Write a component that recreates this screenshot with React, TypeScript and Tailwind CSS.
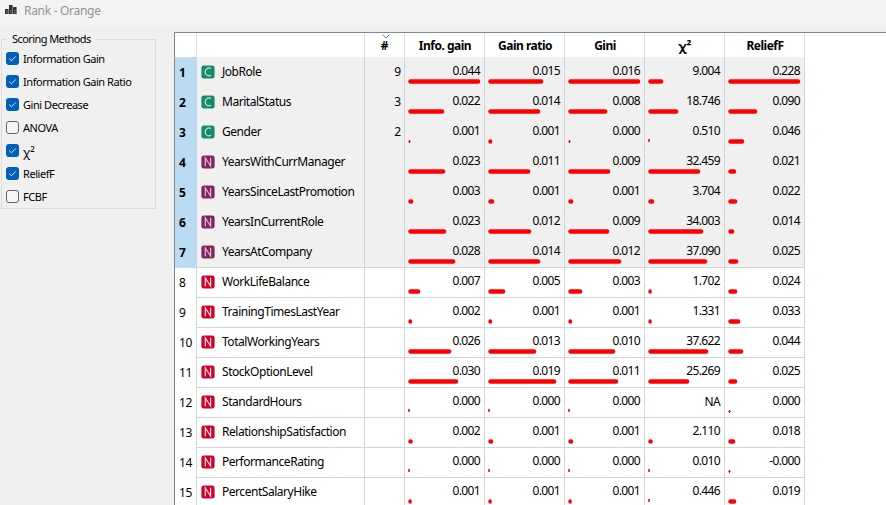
type Row = {
  name: string;
  kind: "C" | "N" | "M";
  count?: string;
  values: string[];
  bars: number[];
};

// Bar lengths are in pixels; 0 is a bare tick and -1 draws nothing.
const rows: Row[] = [
  { name: "JobRole", kind: "C", count: "9", values: ["0.044", "0.015", "0.016", "9.004", "0.228"], bars: [72, 55, 72, 15, 72] },
  { name: "MaritalStatus", kind: "C", count: "3", values: ["0.022", "0.014", "0.008", "18.746", "0.090"], bars: [36, 52, 39, 30, 29] },
  { name: "Gender", kind: "C", count: "2", values: ["0.001", "0.001", "0.000", "0.510", "0.046"], bars: [2.5, 4, 2.5, 0, 16] },
  { name: "YearsWithCurrManager", kind: "M", values: ["0.023", "0.011", "0.009", "32.459", "0.021"], bars: [37, 42, 42, 52, 8] },
  { name: "YearsSinceLastPromotion", kind: "M", values: ["0.003", "0.001", "0.001", "3.704", "0.022"], bars: [5, 6, 5, 6, 9] },
  { name: "YearsInCurrentRole", kind: "M", values: ["0.023", "0.012", "0.009", "34.003", "0.014"], bars: [38, 43, 41, 55, 6] },
  { name: "YearsAtCompany", kind: "M", values: ["0.028", "0.014", "0.012", "37.090", "0.025"], bars: [47, 52, 53, 59, 10] },
  { name: "WorkLifeBalance", kind: "N", values: ["0.007", "0.005", "0.003", "1.702", "0.024"], bars: [12, 17, 14, 3.5, 9] },
  { name: "TrainingTimesLastYear", kind: "N", values: ["0.002", "0.001", "0.001", "1.331", "0.033"], bars: [4, 4, 4, 3.5, 12] },
  { name: "TotalWorkingYears", kind: "N", values: ["0.026", "0.013", "0.010", "37.622", "0.044"], bars: [43, 48, 47, 60, 15] },
  { name: "StockOptionLevel", kind: "N", values: ["0.030", "0.019", "0.011", "25.269", "0.025"], bars: [50, 68, 50, 41, 9] },
  { name: "StandardHours", kind: "N", values: ["0.000", "0.000", "0.000", "NA", "0.000"], bars: [0, 0, 0, -1, 2.5] },
  { name: "RelationshipSatisfaction", kind: "N", values: ["0.002", "0.001", "0.001", "2.110", "0.018"], bars: [4.5, 5, 5, 4.5, 7] },
  { name: "PerformanceRating", kind: "N", values: ["0.000", "0.000", "0.000", "0.010", "-0.000"], bars: [0, 0, 0, 0, 2.5] },
  { name: "PercentSalaryHike", kind: "N", values: ["0.001", "0.001", "0.001", "0.446", "0.019"], bars: [3.5, 3.5, 3.5, 0, 8] },
];

const methods = [
  { label: "Information Gain", on: true },
  { label: "Information Gain Ratio", on: true },
  { label: "Gini Decrease", on: true },
  { label: "ANOVA", on: false },
  { label: "χ²", on: true },
  { label: "ReliefF", on: true },
  { label: "FCBF", on: false },
];

const grid = "grid grid-cols-[22px_168px_40px_80px_80px_80px_80px_80px]";
const kindColor = { C: "fill-[#168a6b]", M: "fill-[#852458]", N: "fill-[#cf0128]" };
const letterColor = { C: "stroke-[#bfe3d8]", M: "stroke-[#d5bdd8]", N: "stroke-[#ffdfe4]" };

function KindIcon({ kind }: { kind: Row["kind"] }) {
  return (
    <svg viewBox="0 0 14 14" className={`h-[14px] w-[14px] shrink-0 ${letterColor[kind]}`} strokeWidth="1.2">
      <rect x="0.4" y="0.4" width="13.2" height="13.2" rx="2.4" stroke="none" className={kindColor[kind]} />
      {kind === "C" ? (
        <path d="M10 3.5C7.4 2.2 4.2 3.4 4.2 7S7.4 11.4 10 10.4" fill="none" />
      ) : (
        <path d="M4.3 11.3V3L9.6 11V2.7" fill="none" />
      )}
    </svg>
  );
}

function Bar({ length }: { length: number }) {
  if (length < 0) return null;
  if (length === 0) return <div className="ml-px h-[3px] w-[2px] -translate-x-px bg-[#ff3c3c]" />;
  return (
    <svg width="76" height="5" className="block">
      {length < 3 ? (
        <>
          <rect x="0" y="2" width="3" height="1" fill="#ff5050" />
          <rect x="1" y="1" width="1" height="3" fill="#f00000" />
        </>
      ) : (
        <rect x="0.3" y="0.3" width={length} height="4.4" rx="2.2" fill="#ff0000" />
      )}
    </svg>
  );
}

function Checkbox({ on }: { on: boolean }) {
  return on ? (
    <span className="size-[13px] rounded-[3px] bg-[#005fb8]">
      <svg viewBox="0 0 13 13" className="size-[13px] fill-none stroke-[#d4e6f5]" strokeWidth="1">
        <path d="M3.2 6.6l2.3 2.2 4.3-4.4" />
      </svg>
    </span>
  ) : (
    <span className="size-[13px] rounded-[3px] border border-[#666] bg-[#f5f5f5]" />
  );
}

export default function App() {
  return (
    <div className="flex h-[505px] w-[886px] flex-col overflow-hidden bg-[#f0f0f0] font-['Noto_Sans','Open_Sans',sans-serif] text-[12px] text-black">
      <header className="flex h-[26px] shrink-0 items-start bg-[#f3f3f3] pl-[5px]">
        <svg width="12" height="10" viewBox="0 0 12 10" className="mt-[5px]" fill="#333">
          <path d="M0 4h3.6v5H0zM4 0h3.6v9H4zM8 2h3.6v7H8z" />
          <path d="M1 6h1.5M1 8h1.5M5 5h1.5M5 7h1.5M9 5.5h1.5M9 7.5h1.5" stroke="#aaa" strokeWidth=".6" />
        </svg>
        <h1 className="ml-[7px] mt-[3px] text-[12px] leading-[16px] tracking-[-0.3px] text-[#929292]">Rank - Orange</h1>
      </header>
      <main className="flex min-h-0 flex-1">
        <aside className="w-[174px] shrink-0 pl-px pt-[5px]">
          <fieldset className="h-[178px] w-[155px] border border-[#dcdcdc] pl-[4px]">
            <legend className="ml-px h-[16px] px-[5px] text-[11px] leading-[16px] tracking-[-0.58px]">Scoring Methods</legend>
            <div className="flex flex-col">
              {methods.map((m) => (
                <label key={m.label} className="flex h-[23px] items-center gap-[4px] text-[11px] tracking-[-0.45px]">
                  <Checkbox on={m.on} />
                  {m.label === "χ²" ? (
                    <span className="pt-[3px] text-[12px] leading-[16px] tracking-normal">
                      χ<span className="text-[13px]">²</span>
                    </span>
                  ) : (
                    <span className="pt-px">{m.label}</span>
                  )}
                </label>
              ))}
            </div>
          </fieldset>
        </aside>
        <section className="mt-[6px] flex-1 overflow-hidden border-l border-t border-[#7e8690] bg-white">
          <div className={`${grid} h-[24px] text-center font-bold leading-[26px] tracking-[-0.5px]`}>
            <div className="border-r border-[#e0e0e0]" />
            <div className="border-r border-[#e0e0e0]" />
            <div className="relative border-r border-[#e0e0e0]">
              <svg width="8" height="5" className="absolute left-[17px] top-px fill-none stroke-[#777]">
                <path d="M.5.5L4 4 7.5.5" />
              </svg>
              #
            </div>
            {["Info. gain", "Gain ratio", "Gini", "χ²", "ReliefF"].map((h) => (
              <div key={h} className="border-r border-[#e0e0e0] pl-px">
                {h === "χ²" ? <span className="text-[13px] tracking-normal">{h}</span> : h}
              </div>
            ))}
          </div>
          {rows.map((r, i) => {
            const selected = i < 7;
            return (
              <div key={r.name} className={`${grid} h-[30px]`}>
                <div className={selected ? "bg-[#bbdbf2] pl-[4px] font-bold leading-[31px]" : "border-r border-[#d4d4d4] pl-[4px] leading-[31px] tracking-[-0.4px]"}>
                  {i + 1}
                </div>
                <div className={`flex items-center border-b border-r border-[#d4d4d4] pl-[4px] ${selected ? "bg-[#f0f0f0]" : ""}`}>
                  <span className="-mt-px flex">
                    <KindIcon kind={r.kind} />
                  </span>
                  <span className="ml-[7px] leading-[18px] tracking-[-0.46px]">{r.name}</span>
                </div>
                <div className={`border-b border-r border-[#d4d4d4] pr-[3px] text-right leading-[30px] ${selected ? "bg-[#f0f0f0]" : ""}`}>{r.count}</div>
                {r.values.map((v, c) => (
                  <div key={c} className={`border-b border-r border-[#d4d4d4] pl-[3px] ${selected ? "bg-[#f0f0f0]" : ""}`}>
                    <div className={`h-[22px] pr-[4px] text-right tracking-[-0.65px] ${v === "NA" ? "leading-[30px]" : "leading-[28px]"}`}>{v}</div>
                    <Bar length={r.bars[c]} />
                  </div>
                ))}
              </div>
            );
          })}
        </section>
      </main>
    </div>
  );
}
